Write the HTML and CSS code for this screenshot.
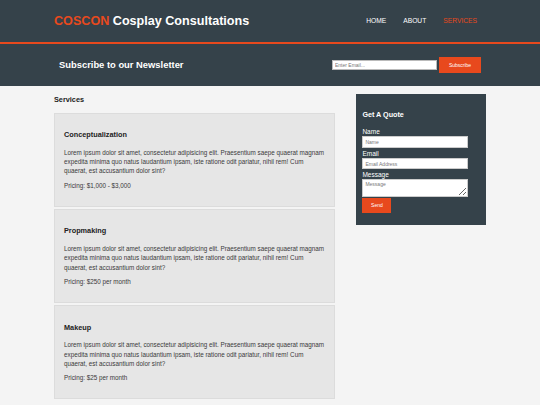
FILE: index.html
```html
<!DOCTYPE html>
<html lang="en">
<head>
<meta charset="utf-8">
<title>COSCON | Services</title>
<link rel="stylesheet" href="styles.css">
</head>
<body>
<header class="site-header">
  <div class="container header-row">
    <div class="branding"><span class="highlight">COSCON</span> Cosplay Consultations</div>
    <nav class="nav">
      <a href="#">HOME</a>
      <a href="#">ABOUT</a>
      <a href="#" class="current">SERVICES</a>
    </nav>
  </div>
</header>
<section class="newsletter">
  <div class="container newsletter-row">
    <div class="newsletter-title">Subscribe to our Newsletter</div>
    <form class="newsletter-form">
      <input type="email" class="nl-input" placeholder="Enter Email...">
      <button type="button" class="btn nl-btn">Subscribe</button>
    </form>
  </div>
</section>
<section class="container main-row">
  <div class="main-col">
    <div class="page-title">Services</div>
    <div class="box">
      <div class="box-title">Conceptualization</div>
      <p>Lorem ipsum dolor sit amet, consectetur adipisicing elit. Praesentium saepe quaerat magnam expedita minima quo natus laudantium ipsam, iste ratione odit pariatur, nihil rem! Cum quaerat, est accusantium dolor sint?</p>
      <p>Pricing: $1,000 - $3,000</p>
    </div>
    <div class="box">
      <div class="box-title">Propmaking</div>
      <p>Lorem ipsum dolor sit amet, consectetur adipisicing elit. Praesentium saepe quaerat magnam expedita minima quo natus laudantium ipsam, iste ratione odit pariatur, nihil rem! Cum quaerat, est accusantium dolor sint?</p>
      <p>Pricing: $250 per month</p>
    </div>
    <div class="box">
      <div class="box-title">Makeup</div>
      <p>Lorem ipsum dolor sit amet, consectetur adipisicing elit. Praesentium saepe quaerat magnam expedita minima quo natus laudantium ipsam, iste ratione odit pariatur, nihil rem! Cum quaerat, est accusantium dolor sint?</p>
      <p>Pricing: $25 per month</p>
    </div>
  </div>
  <aside class="sidebar">
    <div class="quote">
      <div class="quote-title">Get A Quote</div>
      <form class="quote-form">
        <label class="field-label">Name</label>
        <input type="text" class="field" placeholder="Name">
        <label class="field-label">Email</label>
        <input type="email" class="field" placeholder="Email Address">
        <label class="field-label">Message</label>
        <textarea class="field field-area" placeholder="Message"></textarea>
        <button type="button" class="btn send-btn">Send</button>
      </form>
    </div>
  </aside>
</section>
</body>
</html>
```
FILE: styles.css
```css
* { box-sizing: border-box; }
body {
  margin: 0;
  background: #f4f4f4;
  font-family: "Liberation Sans", Arial, sans-serif;
  font-size: 6.3px;
  line-height: 1.5;
  color: #3a3a3a;
}
.container {
  width: 80%;
  margin: 0 auto;
}
.site-header {
  background: #35424a;
  color: #fff;
  border-bottom: 2px solid #e8491d;
}
.header-row {
  height: 42px;
  display: flex;
  align-items: center;
  justify-content: space-between;
}
.branding {
  font-size: 12.6px;
  font-weight: bold;
  line-height: 1;
  padding-top: 1px;
}
.highlight, .nav a.current { color: #e8491d; }
.nav {
  display: flex;
  padding-right: 9px;
  gap: 17px;
}
.nav a {
  color: #fff;
  text-decoration: none;
  font-size: 6.7px;
  line-height: 1;
}
.newsletter {
  background: #35424a;
  color: #fff;
}
.newsletter-row {
  height: 42px;
  padding: 0 5px;
  display: flex;
  align-items: center;
  justify-content: space-between;
}
.newsletter-title {
  font-size: 9.4px;
  font-weight: bold;
}
.newsletter-form {
  display: flex;
  align-items: center;
  gap: 2px;
}
.nl-input {
  width: 105px;
  height: 10px;
  padding: 0 2px;
  border: 1px solid #bbb;
  font-family: inherit;
  font-size: 5px;
  color: #333;
}
.nl-input::placeholder, .field::placeholder { color: #777; }
.btn {
  background: #e8491d;
  color: #fff;
  border: 0;
  font-family: inherit;
  font-size: 5px;
}
.nl-btn {
  width: 42px;
  height: 16.5px;
}
.main-row {
  display: flex;
  justify-content: space-between;
  align-items: flex-start;
  padding-top: 8px;
}
.main-col { width: 65%; }
.page-title {
  font-size: 7.3px;
  font-weight: bold;
  color: #222;
  line-height: 11px;
  margin: 0 0 7.5px;
}
.box {
  background: #e6e6e6;
  border: 1px solid #dcdcdc;
  padding: 10px 9px;
  margin-bottom: 2.4px;
  height: 94px;
}
.box-title {
  font-size: 7.3px;
  font-weight: bold;
  color: #222;
  line-height: 11px;
  margin: 5.5px 0 7.5px;
}
.box p { margin: 0 0 4.8px; }
.sidebar {
  width: 30%;
}
.quote {
  background: #35424a;
  color: #fff;
  padding: 14.5px 6px 12px;
}
.quote-title {
  font-size: 7.2px;
  font-weight: bold;
  line-height: 11px;
  margin-bottom: 6.5px;
}
.quote-form { display: flex; flex-direction: column; align-items: flex-start; }
.field-label {
  display: block;
  font-size: 6.5px;
  line-height: 9px;
  margin-top: 1px;
}
.field {
  width: 90%;
  height: 11.7px;
  border: 1px solid #ccc;
  padding: 0 2px;
  font-family: inherit;
  font-size: 5px;
  color: #333;
  margin: 0;
}
.field-area {
  height: 17.6px;
  resize: vertical;
  padding: 1px 2px;
}
.send-btn {
  width: 29px;
  height: 15px;
  margin-top: 1px;
}
```
